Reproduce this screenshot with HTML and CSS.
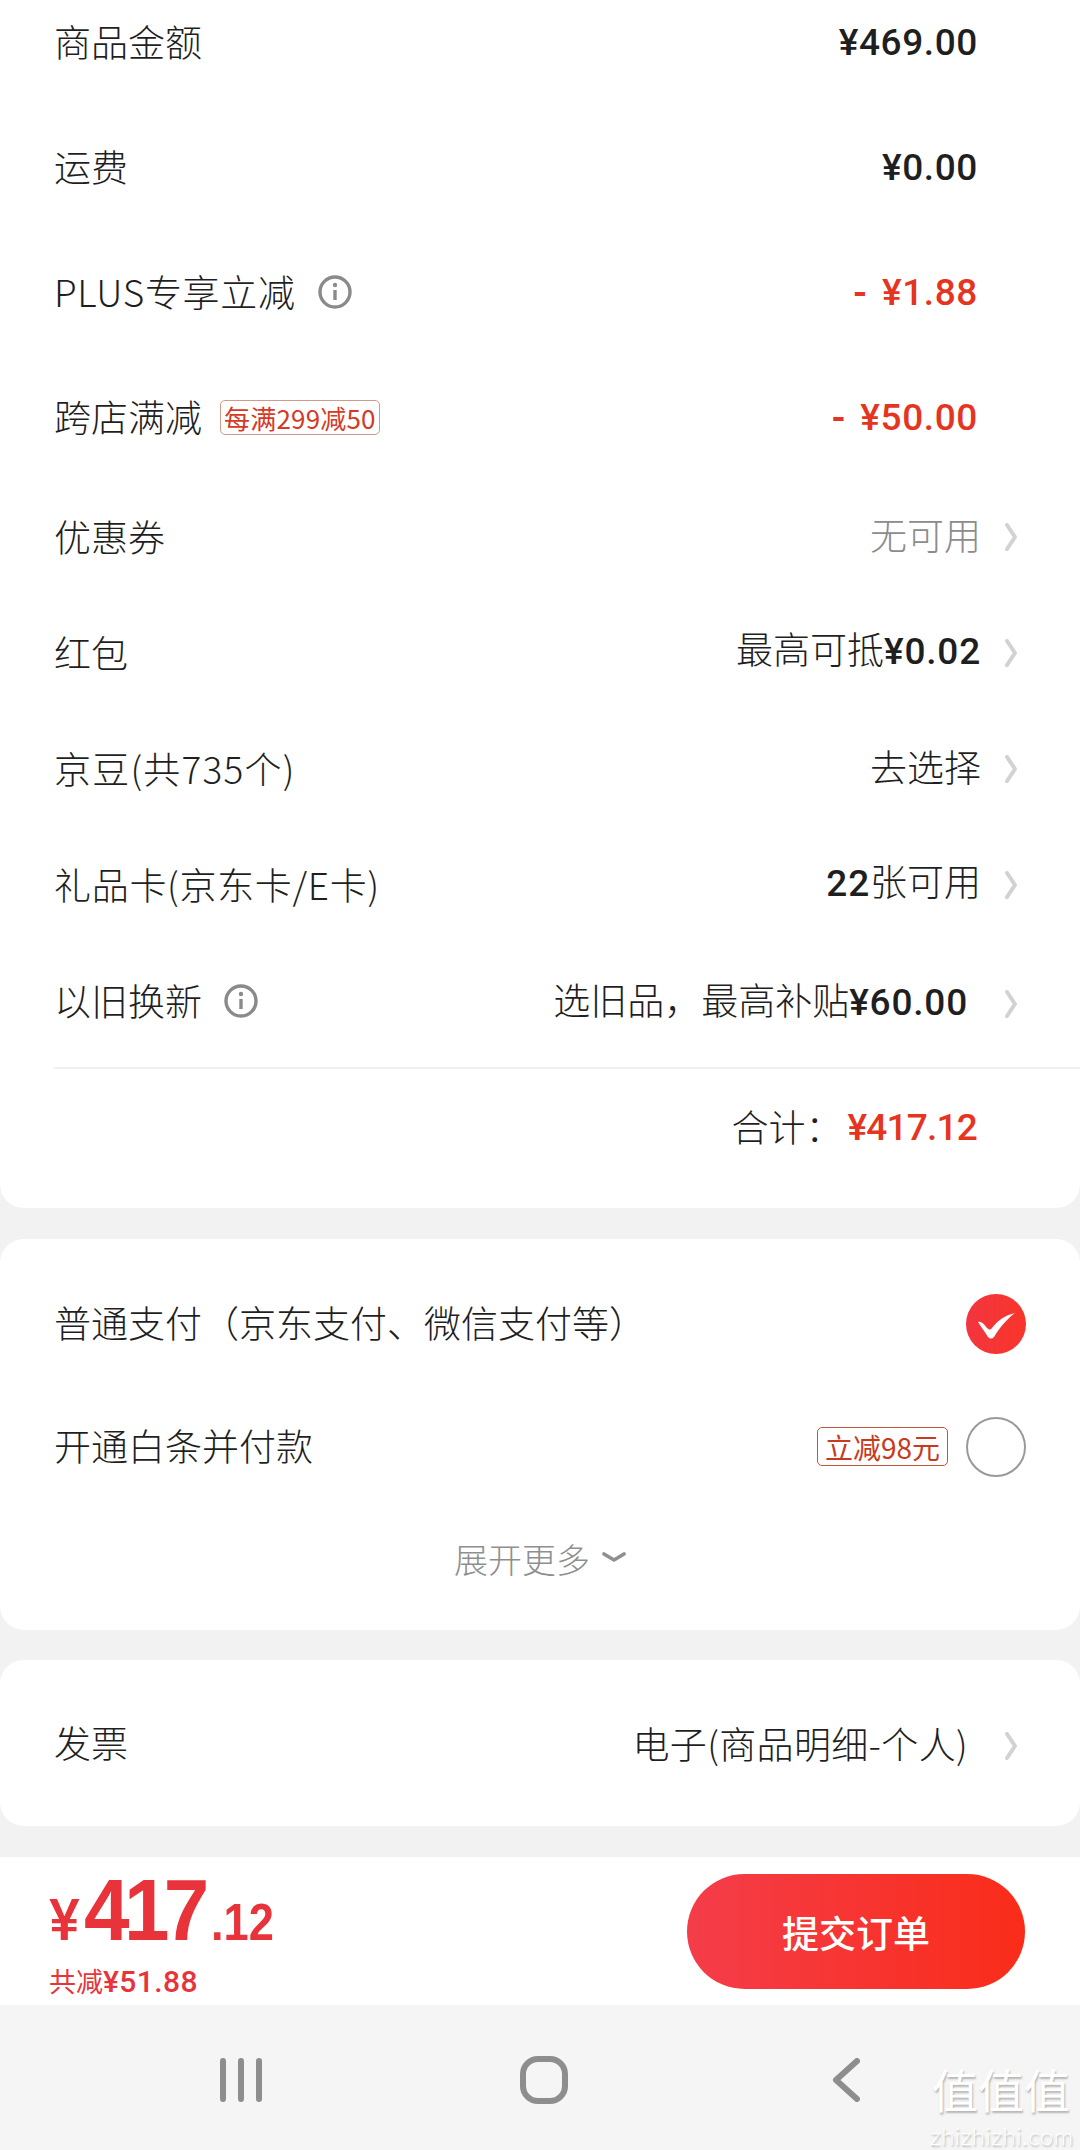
FILE: index.html
```html
<!DOCTYPE html>
<html lang="zh-CN">
<head>
<meta charset="utf-8">
<title>订单</title>
<link rel="stylesheet" href="styles.css">
</head>
<body>
<div class="page">
  <section class="card summary">
    <div class="row tall"><span class="label">商品金额</span><span class="amount">¥469.00</span></div>
    <div class="row tall"><span class="label">运费</span><span class="amount">¥0.00</span></div>
    <div class="row tall"><span class="label-group"><span class="label mix">PLUS专享立减</span><svg class="info" viewBox="0 0 34 34"><circle cx="17" cy="17" r="15"/><path d="M17 15v10"/><circle class="dot" cx="17" cy="10" r="2.2"/></svg></span><span class="amount red"><span class="minus">-</span>¥1.88</span></div>
    <div class="row tall"><span class="label-group"><span class="label">跨店满减</span><span class="tag soft">每满299减50</span></span><span class="amount red"><span class="minus">-</span>¥50.00</span></div>
    <div class="row nav-row"><span class="label">优惠券</span><span class="link"><span class="value grey">无可用</span><svg class="chev" viewBox="0 0 14 28"><path d="M3 2l8 12L3 26"/></svg></span></div>
    <div class="row nav-row"><span class="label">红包</span><span class="link"><span class="value">最高可抵<b>¥0.02</b></span><svg class="chev" viewBox="0 0 14 28"><path d="M3 2l8 12L3 26"/></svg></span></div>
    <div class="row nav-row"><span class="label mix-wide">京豆(共735个)</span><span class="link"><span class="value">去选择</span><svg class="chev" viewBox="0 0 14 28"><path d="M3 2l8 12L3 26"/></svg></span></div>
    <div class="row nav-row"><span class="label mix">礼品卡(京东卡/E卡)</span><span class="link"><span class="value"><b>22</b>张可用</span><svg class="chev" viewBox="0 0 14 28"><path d="M3 2l8 12L3 26"/></svg></span></div>
    <div class="row nav-row"><span class="label-group"><span class="label">以旧换新</span><svg class="info" viewBox="0 0 34 34"><circle cx="17" cy="17" r="15"/><path d="M17 15v10"/><circle class="dot" cx="17" cy="10" r="2.2"/></svg></span><span class="link wide"><span class="value">选旧品，最高补贴<b>¥60.00</b></span><svg class="chev" viewBox="0 0 14 28"><path d="M3 2l8 12L3 26"/></svg></span></div>
    <div class="total"><span class="label">合计：</span><span class="amount red compact">¥417.12</span></div>
  </section>

  <section class="card payment">
    <div class="row pay"><span class="label">普通支付（京东支付、微信支付等）</span><svg class="radio" viewBox="0 0 60 60"><defs><linearGradient id="g" x1="0" x2="1" y1="0" y2="0"><stop offset="0" stop-color="#f2353f"/><stop offset="1" stop-color="#f9352a"/></linearGradient></defs><circle cx="30" cy="30" r="30" fill="url(#g)"/><path d="M12 28c3-1 6 2 9 6 3 2 3 2 5 0 6-8 14-13 23-15-7 5-15 14-21 24-2 2-4 2-6 0-3-5-7-10-10-15z" fill="#fff"/></svg></div>
    <div class="row pay"><span class="label">开通白条并付款</span><span class="pay-side"><span class="tag strong">立减98元</span><span class="radio empty"></span></span></div>
    <div class="more"><span>展开更多</span><svg class="more-chev" viewBox="0 0 24 12"><path d="M2 2l10 6 10-6"/></svg></div>
  </section>

  <section class="card invoice">
    <div class="row invoice-row"><span class="label">发票</span><span class="link wide"><span class="value mix-thin">电子(商品明细-个人)</span><svg class="chev" viewBox="0 0 14 28"><path d="M3 2l8 12L3 26"/></svg></span></div>
  </section>

  <footer class="bar">
    <div class="price">
      <div class="price-main"><span class="cur">¥</span><span class="int">417</span><span class="dec">.12</span></div>
      <div class="saved">共减<span class="saved-num">¥51.88</span></div>
    </div>
    <button class="submit">提交订单</button>
  </footer>

  <nav class="sysnav">
    <svg class="sys recents" viewBox="0 0 42 44"><path d="M3 3v38M21 3v38M39 3v38"/></svg>
    <svg class="sys home" viewBox="0 0 48 48"><rect x="3" y="3" width="42" height="42" rx="15"/></svg>
    <svg class="sys back" viewBox="0 0 28 44"><path d="M25 3L4 22l21 19"/></svg>
    <div class="watermark"><div class="wm-cn">值值值</div><div class="wm-en">zhizhizhi.com</div></div>
  </nav>
</div>
</body>
</html>
```

FILE: styles.css
```css
* { box-sizing: border-box; }
html, body { margin: 0; padding: 0; }
body {
  width: 1080px;
  height: 2150px;
  overflow: hidden;
  background: #f2f2f2;
  color: #1f1f1f;
  font-family: "Noto Sans CJK SC", "Liberation Sans", sans-serif;
  font-size: 37px;
  font-weight: 300;
}
.page { display: flex; flex-direction: column; height: 2150px; overflow: hidden; }

.card { background: #fff; border-radius: 24px; }
.summary { margin-top: -20px; height: 1228px; border-radius: 0 0 24px 24px; margin-bottom: 31px; }
.payment { height: 391px; margin-bottom: 30px; }
.invoice { height: 166px; margin-bottom: 31px; }

.row { display: flex; align-items: center; justify-content: space-between; padding-left: 54px; }
.tall { height: 125px; padding-right: 102px; }
.nav-row { height: 116px; padding-right: 62px; }
.nav-row:nth-child(5) { margin-top: -1px; }
.label { line-height: 1.2; white-space: nowrap; margin-bottom: 2px; }
.mix { letter-spacing: 0.7px; }
.mix-wide { letter-spacing: 1.2px; }
.mix-thin { letter-spacing: 0.35px; }
.label-group { display: flex; align-items: center; }

.amount {
  font-family: Roboto, "Liberation Sans", sans-serif;
  font-weight: 500;
  font-size: 37px;
  letter-spacing: 0.6px;
  line-height: 1.2;
  margin-top: 2px;
}
.compact { letter-spacing: -0.8px; margin-left: 5px; }
.red { color: #e5341f; }
.minus { margin-right: 14px; font-weight: 700; }

.info { width: 34px; height: 34px; margin-left: 22px; fill: none; stroke: #8a8a8a; stroke-width: 3.4; }
.info .dot { fill: #8a8a8a; stroke: none; }

.tag { display: inline-flex; align-items: center; white-space: nowrap; border-radius: 5px; font-weight: 400; }
.soft { height: 35px; margin-left: 18px; padding: 0 3px; font-size: 26px; letter-spacing: 0.2px; color: #d43a24; border: 1px solid #d29a8c; }
.strong { height: 39px; padding: 0 7px; font-size: 28px; color: #c83a20; border: 1px solid #c4553c; }

.link { display: flex; align-items: center; gap: 23px; }
.link .value { margin-bottom: 6px; }
.wide { gap: 36px; }
.wide .value { margin-bottom: 0; }
.wide .chev { margin-top: 6px; }
.value { line-height: 1.2; white-space: nowrap; }
.value b { font-family: Roboto, "Liberation Sans", sans-serif; font-weight: 500; font-size: 37px; letter-spacing: 0.8px; }
.grey { color: #8c8c8c; }
.chev { width: 14px; height: 28px; fill: none; stroke: #d2d2d2; stroke-width: 4; stroke-linecap: round; stroke-linejoin: round; }

.total {
  display: flex;
  align-items: center;
  justify-content: flex-end;
  height: 118px;
  margin: 8px 0 0 54px;
  padding-right: 103px;
  border-top: 2px solid #efefef;
}

.pay { padding-right: 54px; height: 123px; }
.pay:first-child { margin-top: 23px; }
.pay-side { display: flex; align-items: center; gap: 18px; }
.radio { display: block; width: 60px; height: 60px; }
.empty { border-radius: 50%; border: 2px solid #999; }
.more { display: flex; align-items: center; justify-content: center; gap: 12px; height: 100px; margin-top: 0; color: #8f8f8f; font-size: 34px; }
.more-chev { width: 24px; height: 12px; fill: none; stroke: #8f8f8f; stroke-width: 3.6; stroke-linecap: round; stroke-linejoin: round; }

.invoice-row { height: 166px; padding-right: 62px; }

.bar {
  display: flex;
  align-items: flex-start;
  justify-content: space-between;
  height: 148px;
  padding: 12px 55px 0 49px;
  background: #fff;
}
.price { color: #e8333a; width: 320px; }
.price-main { display: flex; align-items: baseline; height: 82px; font-family: "Liberation Sans", sans-serif; font-weight: 700; line-height: 82px; }
.cur { font-size: 58px; font-weight: 500; font-family: Roboto, sans-serif; margin-right: 4px; }
.int { display: inline-block; font-size: 88px; letter-spacing: -6px; transform: scaleX(0.93); transform-origin: left bottom; margin-right: -9px; }
.dec { display: inline-block; font-size: 52px; font-weight: 700; transform: scaleX(0.87); transform-origin: left bottom; margin-left: 7px; }
.saved { font-size: 27px; font-weight: 400; line-height: 34px; margin-top: 13px; white-space: nowrap; }
.saved-num { font-family: Roboto, sans-serif; font-weight: 500; font-size: 30px; letter-spacing: 0.4px; }
.submit {
  width: 338px;
  height: 115px;
  margin-top: 5px;
  border: 0;
  border-radius: 58px;
  color: #fff;
  background: linear-gradient(90deg, #f43d4a, #fa2c19);
  font-family: "Noto Sans CJK SC", sans-serif;
  font-size: 37px;
  font-weight: 500;
}

.sysnav { position: relative; flex: 1; background: #f5f5f5; }
.sys { position: absolute; fill: none; stroke: #8e8e8e; stroke-linecap: round; stroke-linejoin: round; }
.recents { left: 220px; top: 53px; width: 42px; height: 44px; stroke-width: 6; }
.home { left: 520px; top: 51px; width: 48px; height: 48px; stroke-width: 6; }
.back { left: 832px; top: 53px; width: 28px; height: 44px; stroke-width: 6; }
.watermark { position: absolute; left: 930px; top: 50px; width: 142px; color: #fff; text-shadow: 1px 2px 2px #b5b5b5; text-align: center; }
.wm-cn { font-size: 46px; line-height: 66px; font-weight: 400; white-space: nowrap; }
.wm-en { font-family: Lato, sans-serif; font-size: 24px; line-height: 29px; letter-spacing: 0.5px; white-space: nowrap; }
```
